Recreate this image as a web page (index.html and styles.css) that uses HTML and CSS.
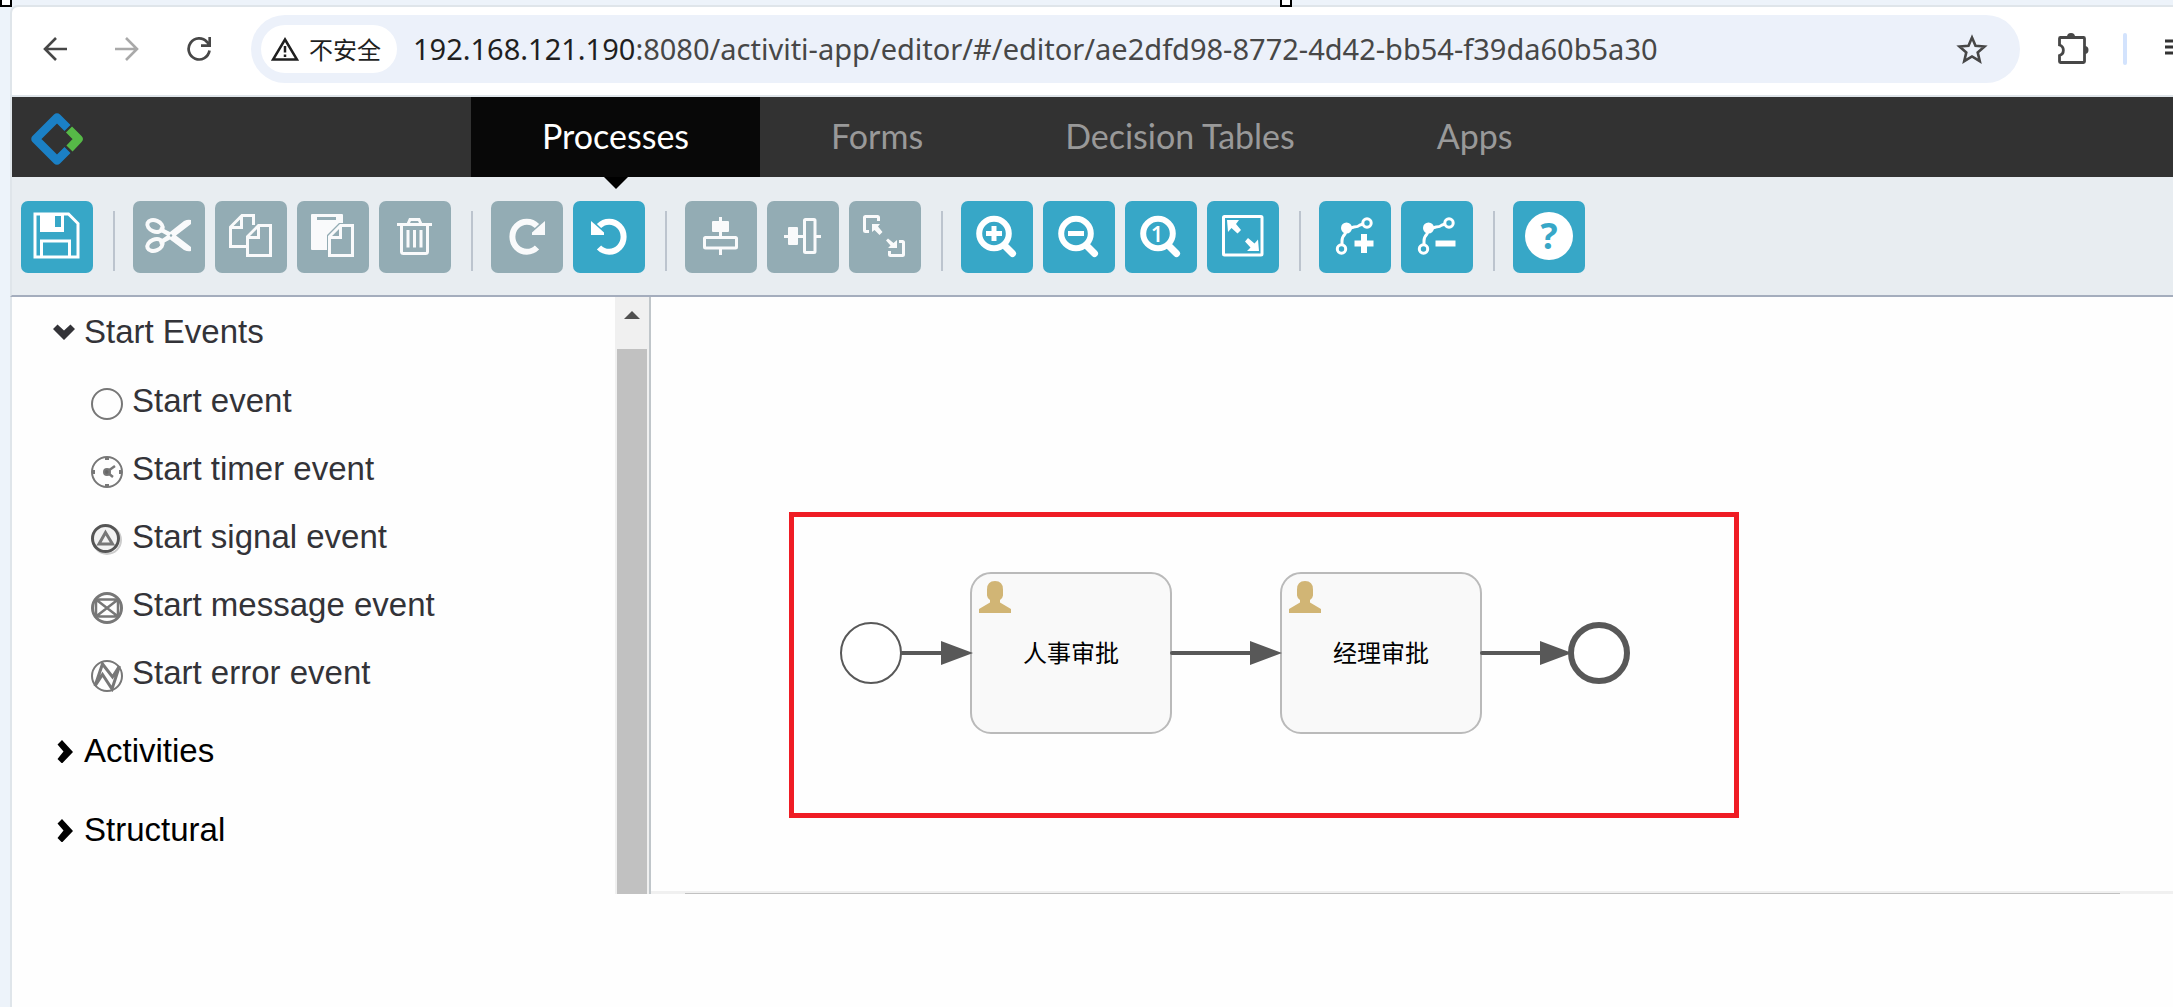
FILE: index.html
```html
<!DOCTYPE html>
<html lang="zh-CN">
<head>
<meta charset="utf-8">
<title>Activiti Editor</title>
<link rel="stylesheet" href="styles.css">
</head>
<body>
<div class="window">
  <span class="handle handle-corner"></span>
  <span class="handle handle-middle"></span>

  <div class="browser-bar">
    <div class="browser-nav">
      <button type="button" aria-label="Back"><svg viewBox="0 0 24 24" width="24" height="24"><path d="M24 12H2M13 1 2 12l11 11" fill="none" stroke="#474747" stroke-width="2.6"/></svg></button>
      <button type="button" aria-label="Forward"><svg viewBox="0 0 24 24" width="24" height="24"><path d="M0 12h22M11 1l11 11-11 11" fill="none" stroke="#a9a9a9" stroke-width="2.6"/></svg></button>
      <button type="button" aria-label="Reload"><svg viewBox="0 0 24 24" width="24" height="24"><path d="M22.500 13.500A10.500 10.500 0 1 1 20 5l2 2.500M22.700 0v8.700H14" fill="none" stroke="#474747" stroke-width="2.700"/></svg></button>
    </div>
    <div class="address">
      <button type="button" class="security">
        <svg viewBox="0 0 28 24" width="28" height="24"><path d="M14 2.500 26 22.500H2z" fill="none" stroke="#1f1f1f" stroke-width="2.500"/><path d="M14 9v6.500M14 17.500v2.500" stroke="#1f1f1f" stroke-width="2.500"/></svg>
        <span>不安全</span>
      </button>
      <div class="url" role="textbox" aria-label="Address"><span class="url-host">192.168.121.190</span>:8080/activiti-app/editor/#/editor/ae2dfd98-8772-4d42-bb54-f39da60b5a30</div>
      <button type="button" aria-label="Bookmark"><svg viewBox="0 0 32 32" width="32" height="32"><path d="m16 4.500 3.500 8.200 9 .800-6.800 5.900 2.100 8.800-7.800-4.700-7.800 4.700 2.100-8.800-6.800-5.900 9-.800z" fill="none" stroke="#474747" stroke-width="2.600"/></svg></button>
    </div>
    <button type="button" aria-label="Extensions"><svg viewBox="0 0 34 34" width="34" height="34"><path d="M4.500 5.500h23q1 0 1 1v23q0 1-1 1h-23q-1 0-1-1v-6a5.500 5.500 0 0 0 0-10.500v-6.500q0-1 1-1z" fill="none" stroke="#474747" stroke-width="2.800"/><path d="M11 5a4 4 0 0 1 8 0zM28.500 14a4 4 0 0 1 0 8z" fill="#474747"/></svg></button>
    <span class="browser-divider"></span>
    <button type="button" class="media" aria-label="Media"><svg viewBox="0 0 32 24" width="32" height="24"><path d="M0 4h32M0 10h32M0 16h20" stroke="#333" stroke-width="3"/></svg></button>
  </div>

  <header class="app-header">
    <a class="logo" href="#" aria-label="Home"><svg viewBox="0 0 52 52" width="52" height="52" fill="none" stroke-width="8.500" stroke-linejoin="round"><path d="M36.500 15 26 4.500 4.500 26 26 47.500 36.500 37" stroke="#1b80c5"/><path d="M38 16.500 47.500 26 38.500 35.500" stroke="#56b947"/></svg></a>
    <nav class="tabs">
      <a class="tab active" href="#processes">Processes</a>
      <a class="tab" href="#forms">Forms</a>
      <a class="tab" href="#decisions">Decision Tables</a>
      <a class="tab" href="#apps">Apps</a>
    </nav>
  </header>

  <div class="toolbar" role="toolbar">
    <div class="group">
      <button type="button" class="tool" aria-label="Save"><svg viewBox="0 0 72 72"><path d="M14 13h33.500L57 22.500V56H14z" class="line"/><path d="M19 12h24v19H19zM34 15v11h6V15z" fill-rule="evenodd" class="fill"/><path d="M20.500 57V40h28v17" class="line"/></svg></button>
    </div>
    <div class="group">
      <button type="button" class="tool" disabled aria-label="Cut"><svg viewBox="0 0 72 72"><g class="line heavy"><ellipse cx="22" cy="25" rx="8" ry="5.500" transform="rotate(22 22 25)"/><ellipse cx="22" cy="44" rx="8" ry="5.500" transform="rotate(-22 22 44)"/></g><path d="M27 26l10 5 14-11q4-2 7-1v4L43 34.500 58 46v4q-3 1-7-1L37 38.500 27 44l-1-4 8-5.500-8-4.500z" class="fill"/><circle cx="38" cy="34.500" r="1.200" fill="#93acb4"/></svg></button>
      <button type="button" class="tool" disabled aria-label="Copy"><svg viewBox="0 0 72 72" class="line"><path d="M31 45.500H15.500V26L27 14.500h11.500V24M15.500 26.500H26.500V15"/><path d="M43.500 24.500h12v30h-23V35.500zM43.500 24.500v12h-11"/></svg></button>
      <button type="button" class="tool" disabled aria-label="Paste"><svg viewBox="0 0 72 72"><path d="M15 13h30q1 0 1 1v8h-4L30 34v15H15q-1 0-1-1V14q0-1 1-1zM20 16v3h19v-3z" fill-rule="evenodd" class="fill"/><path d="M43.500 24.500h12v30h-23V35.500zM43.500 24.500v12h-11" class="line"/></svg></button>
      <button type="button" class="tool" disabled aria-label="Delete"><svg viewBox="0 0 72 72" class="line"><path d="M18 23.500h35M29 23l2-4.500h9l2 4.500M22.500 24v26.500q0 2 2 2h22q2 0 2-2V24M29 29v17.500M35.500 29v17.500M42 29v17.500"/></svg></button>
    </div>
    <div class="group">
      <button type="button" class="tool" disabled aria-label="Redo"><svg viewBox="0 0 72 72"><path d="M46 46.500A14.500 15 0 1 1 46 25" class="thick"/><path d="M54 20v14H41v-2.500l5-4.500 4.500-4z" class="fill"/></svg></button>
      <button type="button" class="tool" aria-label="Undo"><svg viewBox="0 0 72 72"><path d="M26 46.500A14.500 15 0 1 0 26 25" class="thick"/><path d="M18 20v14h13v-2.500L26 27l-4.500-4z" class="fill"/></svg></button>
    </div>
    <div class="group">
      <button type="button" class="tool" disabled aria-label="Align vertical"><svg viewBox="0 0 72 72"><path d="M35.500 16v20M35.500 48v6" class="line"/><rect x="27" y="20" width="17" height="11" rx="1" class="fill"/><rect x="19.500" y="36.500" width="32" height="10.500" rx="1" class="line"/></svg></button>
      <button type="button" class="tool" disabled aria-label="Align horizontal"><svg viewBox="0 0 72 72"><path d="M17 35.500h20M49 35.500h5" class="line"/><rect x="21" y="26" width="10" height="18" rx="1" class="fill"/><rect x="37.500" y="18.500" width="10.500" height="33" rx="1" class="line"/></svg></button>
      <button type="button" class="tool" disabled aria-label="Same size"><svg viewBox="0 0 72 72"><path d="M20 30.500h-3.500q-1 0-1-1v-13q0-1 1-1h12q1 0 1 1V20M50 40.500h3.500q1 0 1 1v12q0 1-1 1h-12q-1 0-1-1V50" class="line"/><path d="M23 23h8l-2 2.500 4.500 5.500-3 3-5-5-2.500 2zM48 47h-9l2.500-2.500-4.500-5 2-2 5.500 4.500 3.500-3z" class="fill"/></svg></button>
    </div>
    <div class="group">
      <button type="button" class="tool" aria-label="Zoom in"><svg viewBox="0 0 72 72"><circle cx="33" cy="32.500" r="14.800" class="thick"/><path d="M43.500 44.500l8 8" class="grip"/><path d="M33 25v15M25 32.500h16" stroke="#fff" stroke-width="5"/></svg></button>
      <button type="button" class="tool" aria-label="Zoom out"><svg viewBox="0 0 72 72"><circle cx="33" cy="32.500" r="14.800" class="thick"/><path d="M43.500 44.500l8 8" class="grip"/><path d="M25 32.500h16" stroke="#fff" stroke-width="5"/></svg></button>
      <button type="button" class="tool" aria-label="Zoom to actual size"><svg viewBox="0 0 72 72"><circle cx="33" cy="32.500" r="14.800" class="thick"/><path d="M43.500 44.500l8 8" class="grip"/><text x="32" y="41" class="one">1</text></svg></button>
      <button type="button" class="tool" aria-label="Zoom to fit"><svg viewBox="0 0 72 72"><rect x="16.500" y="15.500" width="38.500" height="38.500" rx="1" class="line"/><path d="M20 19h12l-3 4 5 6-3.500 3.500-6-5.500-3.500 4zM52 50H40l3.500-3.500-5.500-6 3-3.500 6.500 5.500 3.500-4z" class="fill"/></svg></button>
    </div>
    <div class="group">
      <button type="button" class="tool" aria-label="Add bend point"><svg viewBox="0 0 72 72"><path d="M23 44V40q0-4 3-7l2-5 7-2q4 0 6-2l3-1" class="thin"/><circle cx="27.500" cy="27" r="5.500" class="fill"/><circle cx="48" cy="22" r="4.200" class="thin"/><circle cx="22.500" cy="48" r="4.200" class="thin"/><path d="M45 33v19M35.500 42.500h19" stroke="#fff" stroke-width="6"/></svg></button>
      <button type="button" class="tool" aria-label="Remove bend point"><svg viewBox="0 0 72 72"><path d="M23 44V40q0-4 3-7l2-5 7-2q4 0 6-2l3-1" class="thin"/><circle cx="27.500" cy="27" r="5.500" class="fill"/><circle cx="48" cy="22" r="4.200" class="thin"/><circle cx="22.500" cy="48" r="4.200" class="thin"/><path d="M34.500 42.500h20" stroke="#fff" stroke-width="6"/></svg></button>
    </div>
    <div class="group">
      <button type="button" class="tool" aria-label="Help"><svg viewBox="0 0 72 72"><circle cx="36" cy="35" r="24" fill="#fff"/><text x="36" y="48" class="question">?</text></svg></button>
    </div>
  </div>

  <main class="workspace">
    <aside class="palette">
      <div class="palette-body">
        <h2 class="section open"><svg viewBox="0 0 24 24" width="24" height="24"><path d="M0 9l4.500-4.500L11 10.500l6.500-6L22 9 11 20z" fill="currentColor"/></svg>Start Events</h2>
        <ul class="stencils">
          <li><svg viewBox="0 0 32 32"><circle cx="16" cy="16" r="15"/></svg>Start event</li>
          <li><svg viewBox="0 0 32 32"><circle cx="16" cy="16" r="15"/><path d="M16 1v3M16 28v3M1 16h3M28 16h3" stroke-width="4"/><circle cx="16" cy="16" r="3" fill="#666"/><path d="M17 15l7-5M17 17l5 4" stroke-width="2.500"/></svg>Start timer event</li>
          <li><svg viewBox="0 0 32 32"><circle cx="16" cy="16" r="14" stroke="#ccc"/><circle cx="14.500" cy="14.500" r="13" stroke="#555" stroke-width="3" fill="#f2f2f2"/><path d="M14.500 8.500l7 11.500H8z" stroke-width="3"/></svg>Start signal event</li>
          <li><svg viewBox="0 0 32 32"><circle cx="16" cy="16" r="14.500" stroke-width="3"/><path d="M5 7.500h22v17H5zM5 7.500l22 17M27 7.500l-22 17" stroke-width="2.500"/></svg>Start message event</li>
          <li><svg viewBox="0 0 32 32"><circle cx="16" cy="16" r="15"/><path d="M4 26L11.500 4l10 13L28.500 6 21 29 11.500 14.500z" stroke-width="3"/></svg>Start error event</li>
        </ul>
        <h2 class="section"><svg viewBox="0 0 24 24" width="24" height="24"><path d="M9 1l11 12L9 24.500 4.500 20l6-7.500L4.500 5.500z" fill="currentColor"/></svg>Activities</h2>
        <h2 class="section"><svg viewBox="0 0 24 24" width="24" height="24"><path d="M9 1l11 12L9 24.500 4.500 20l6-7.500L4.500 5.500z" fill="currentColor"/></svg>Structural</h2>
      </div>
      <div class="scroll-y">
        <svg viewBox="0 0 16 8" width="16" height="8"><path d="M8 0l8 8H0z" fill="#505050"/></svg>
        <div class="thumb-y"></div>
      </div>
    </aside>
    <section class="canvas">
      <svg class="diagram" viewBox="0 0 950 306" width="950" height="306">
        <defs>
          <path id="user" d="M8 8.500Q8 0 16 0t8 8.500v6q0 2-3 4.500v2.500L32 28v4H0v-4l11-6.500V19q-3-2.500-3-4.500z"/>
        </defs>
        <rect x="2.500" y="2.500" width="945" height="301" fill="none" stroke="#ef1c24" stroke-width="5"/>
        <circle cx="82" cy="141" r="30" fill="#fff" stroke="#585858" stroke-width="2"/>
        <g fill="#f9f9f9" stroke="#bababa" stroke-width="2">
          <rect x="182" y="61" width="200" height="160" rx="20"/>
          <rect x="492" y="61" width="200" height="160" rx="20"/>
        </g>
        <g stroke="#585858" stroke-width="4" stroke-linecap="round">
          <path d="M113 141h41M383 141h80M693 141h60"/>
        </g>
        <path d="M152 129l32 12-32 12zM461 129l32 12-32 12zM751 129l32 12-32 12z" fill="#585858"/>
        <circle cx="810" cy="141" r="28" fill="#fff" stroke="#585858" stroke-width="6"/>
        <g fill="#d1b575"><use href="#user" x="190" y="69"/><use href="#user" x="500" y="69"/></g>
        <text x="282" y="150" class="task-name">人事审批</text>
        <text x="592" y="150" class="task-name">经理审批</text>
      </svg>
      <div class="scroll-x"><div class="thumb-x"></div></div>
    </section>
  </main>
</div>
</body>
</html>
```
FILE: styles.css
```css
* { box-sizing: border-box; }

body {
  margin: 0;
  background: #edf3fa;
  font-family: "Liberation Sans", "Noto Sans CJK SC", sans-serif;
}

button {
  flex: none;
  padding: 0;
  border: 0;
  background: none;
  color: inherit;
  font: inherit;
}

svg { display: block; flex: none; }

.window {
  position: relative;
  display: flex;
  flex-direction: column;
  min-height: 100vh;
  padding: 5px 0 113px 10px;
  overflow: hidden;
  background: #edf3fa;
}

.handle {
  position: absolute;
  top: -3px;
  width: 12px;
  height: 10px;
  border: 2px solid #000;
  background: #fff;
}
.handle-corner { left: 0; }
.handle-middle { left: 1280px; }

.window::after {
  content: "";
  position: absolute;
  inset: auto 0 0 10px;
  height: 113px;
  border-left: 2px solid #dfe5ea;
  background: #fefefe;
}

/* Browser chrome */
.browser-bar {
  display: flex;
  align-items: center;
  height: 92px;
  padding: 0 0 4px 31px;
  border: 2px solid #dfe5ea;
  border-width: 2px 0 2px 2px;
  border-top-left-radius: 8px;
  background: #fff;
  overflow: hidden;
}
.browser-nav { display: flex; gap: 48px; padding-right: 40px; }
.address {
  display: flex;
  flex: 1;
  align-items: center;
  height: 68px;
  padding: 0 32px 0 10px;
  border-radius: 34px;
  background: #ecf1fa;
}
.security {
  display: flex;
  align-items: center;
  gap: 10px;
  height: 48px;
  padding: 0 16px 0 10px;
  border-radius: 24px;
  background: #fff;
  color: #1f1f1f;
  font: 24px/32px "Noto Sans CJK SC", sans-serif;
}
.url {
  flex: 1;
  min-width: 0;
  margin-left: 16px;
  overflow: hidden;
  color: #474747;
  font: 29px/40px "Noto Sans", sans-serif;
  white-space: nowrap;
}
.url-host { color: #1f1f1f; }
.address + button { margin-left: 36px; }
.browser-divider {
  flex: none;
  width: 4px;
  height: 32px;
  margin: 0 38px 0 33px;
  border-radius: 2px;
  background: #d3e3fd;
}
.media { width: 8px; overflow: hidden; }

/* Application header */
.app-header,
.toolbar,
.workspace {
  margin-left: 0;
  border-left: 2px solid #dfe5ea;
}
.app-header {
  display: flex;
  height: 80px;
  background: #323232;
}
.logo { width: 459px; padding: 16px 19px; }
.tabs { display: flex; }
.tab {
  position: relative;
  padding: 0 71px;
  color: #999;
  font: 400 34px/78px Lato, sans-serif;
  text-decoration: none;
  white-space: nowrap;
}
.tab.active { background: #080808; color: #fff; }
.tab.active::after {
  content: "";
  position: absolute;
  top: 100%;
  left: 50%;
  margin-left: -12px;
  border: 12px solid transparent;
  border-top-color: #000;
  border-bottom: 0;
}

/* Editor toolbar */
.toolbar {
  display: flex;
  height: 120px;
  padding: 24px 9px;
  border-bottom: 2px solid #a4adbd;
  background: #e8edf1;
}
.group { display: flex; gap: 10px; }
.group + .group { margin-left: 20px; }
.group + .group::before {
  content: "";
  width: 2px;
  height: 60px;
  margin: 10px 8px 0 0;
  background: #bcc4ce;
}
.tool {
  width: 72px;
  height: 72px;
  border-radius: 7px;
  background: #37a7c7;
}
.tool:disabled { background: #93acb4; }
.tool:disabled svg { opacity: .95; }
.line, .thin, .thick, .grip { fill: none; stroke: #fff; stroke-width: 3px; }
.heavy { stroke-width: 4px; }
.thick { stroke-width: 6px; }
.grip { stroke-width: 7px; stroke-linecap: round; }
.fill { fill: #fff; }
.one { fill: #fff; font: 600 22px "Open Sans", sans-serif; text-anchor: middle; }
.question { fill: #37a7c7; font: bold 36px "Open Sans", sans-serif; text-anchor: middle; }

/* Workspace */
.workspace { display: flex; flex: 1; background: #fefefe; }
.palette {
  display: flex;
  flex: none;
  width: 639px;
  border-right: 2px solid #c0c6ca;
}
.palette-body { flex: 1; padding-left: 41px; color: #000; font-size: 33px; }
.section {
  display: flex;
  align-items: center;
  gap: 7px;
  height: 70px;
  margin: 9px 0 0;
  font-size: 33px;
  font-weight: 400;
}
.section.open { margin-top: 0; color: #333338; }
.stencils { margin: 0; padding: 0 0 0 38px; list-style: none; color: #333338; }
.stencils li { display: flex; align-items: center; gap: 9px; height: 68px; }
.stencils svg {
  width: 32px;
  height: 32px;
  margin-top: 6px;
  fill: none;
  stroke: #777;
  stroke-width: 2px;
}
.scroll-y {
  display: flex;
  flex-direction: column;
  align-items: center;
  width: 34px;
  padding: 14px 2px 0;
  background: #f0f0f0;
}
.thumb-y { flex: 1; align-self: stretch; margin-top: 30px; background: #c1c1c1; }
.canvas {
  display: flex;
  flex: 1;
  flex-direction: column;
  justify-content: space-between;
  min-width: 0;
}
.diagram { margin: 215px 0 0 138px; }
.task-name { font: 24px "Noto Sans CJK SC", sans-serif; text-anchor: middle; }
.scroll-x { height: 3px; padding: 2px 53px 0 34px; background: #f0f0f0; }
.thumb-x { height: 1px; background: #c1c1c1; }
```
